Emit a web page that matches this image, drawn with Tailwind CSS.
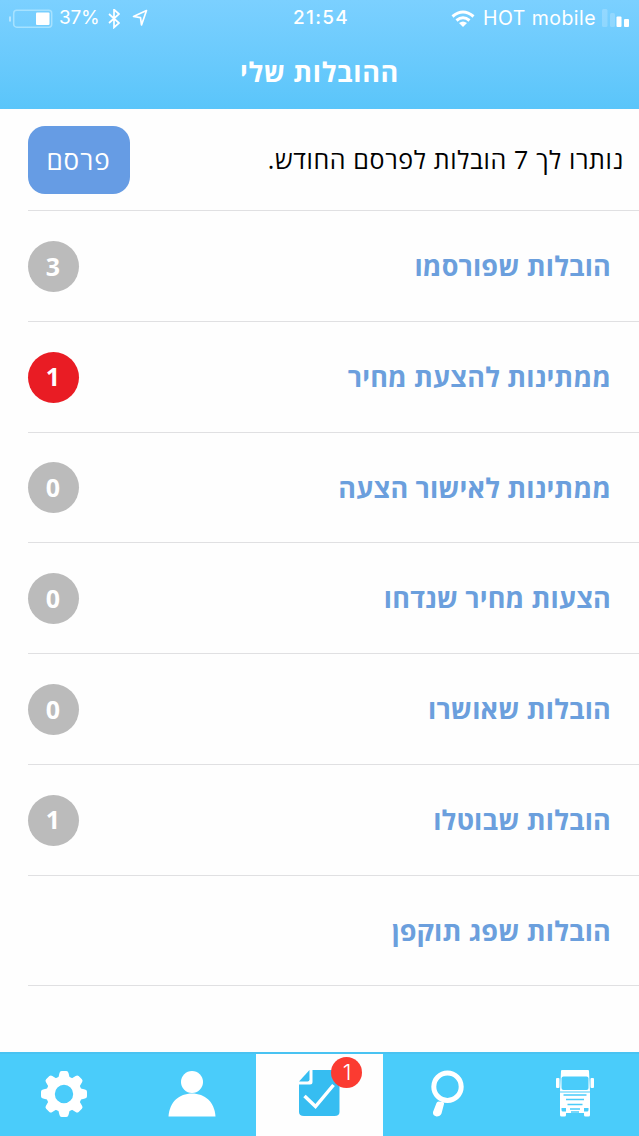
<!DOCTYPE html>
<html lang="he" dir="ltr">
<head>
<meta charset="utf-8">
<title>ההובלות שלי</title>
<script src="https://cdn.jsdelivr.net/npm/@tailwindcss/browser@4"></script>
</head>
<body class="flex h-[1136px] w-[639px] flex-col overflow-hidden bg-[#fefefe] font-['Open_Sans','Noto_Sans',sans-serif]">
<header class="h-[109px] shrink-0 bg-linear-to-b from-[#7bd0ff] to-[#5ac5fa] text-white">
  <div class="grid h-[37px] grid-cols-3 items-center font-['Inter',sans-serif] text-[19px]">
    <div class="flex items-center pl-[9px]">
      <svg class="h-5 w-11" viewBox="0 0 44 20" fill="none"><path d="M1 7.500v5" stroke="#b5e5ff" stroke-width="2"/><rect x="4.700" y="1.200" width="38" height="17" rx="3" stroke="#a6e2ff" stroke-width="1.500"/><rect x="27" y="3.500" width="13.500" height="12.500" rx="1" fill="#fff"/></svg>
      <span class="ml-[6px] w-[40px] whitespace-nowrap tracking-[-0.3px]">37%</span>
      <svg class="ml-[9px] h-5 w-3" viewBox="0 0 12 20" fill="none" stroke="#fff" stroke-width="1.700"><path d="M1 5l10 9-5 4.500V.500L11 5 1 14"/></svg>
      <svg class="ml-[12px] h-5 w-4" viewBox="0 0 16 20" fill="none" stroke="#fff" stroke-width="1.700" stroke-linejoin="round"><path d="M14.500 1.500L1.500 7.500l7 1.200L9.500 16z"/></svg>
    </div>
    <div class="pl-[3px] text-center font-medium tracking-[1.3px]">21:54</div>
    <div class="flex items-center justify-end pr-[9px]">
      <svg class="h-[18px] w-6" viewBox="0 0 24 18" fill="none" stroke="#fff" stroke-width="3"><path d="M1.500 6.500q10.500-9 21 0M5.500 10.500q6.500-5.500 13 0"/><path d="M8 13q4-3 8 0l-4 4z" fill="#fff" stroke="none"/></svg>
      <span class="ml-[8px] whitespace-nowrap text-[19.500px] tracking-[0.450px]">HOT mobile</span>
      <svg class="ml-[6px] h-[19px] w-7" viewBox="0 0 28 19" fill="#fff"><rect width="5.500" height="18" rx="1.500" opacity=".2"/><rect x="8" y="4" width="5" height="14" rx="1.500" opacity=".2"/><rect x="14.500" y="7.500" width="5" height="10.500" rx="1"/><rect x="22" y="10" width="5" height="8" rx="1"/></svg>
    </div>
  </div>
  <h1 dir="rtl" class="mt-[16px] text-center text-[27px] leading-[38px] font-bold tracking-[0.650px]">ההובלות שלי</h1>
</header>
<main class="flex grow flex-col pl-[27.500px]">
  <section class="flex h-[102px] shrink-0 items-center justify-between border-b border-[#e0e0e2] pr-[15px]">
    <button class="h-[68px] w-[102px] rounded-[17px] bg-[#669ce4] pt-[2px] text-[26px] tracking-[1px] text-white">פרסם</button>
    <p dir="rtl" class="text-[25px] tracking-[0.640px] whitespace-nowrap text-black">נותרו לך 7 הובלות לפרסם החודש.</p>
  </section>
  <ul class="text-[27px] font-bold tracking-[0.150px] text-[#6b9fdd]">
    <li class="flex h-[110.75px] items-center justify-between border-b border-[#e0e0e2] pt-px pr-7"><span class="flex size-[51px] items-center justify-center rounded-full bg-[#bbb] text-[25px] text-white">3</span><span dir="rtl">הובלות שפורסמו</span></li>
    <li class="flex h-[110.75px] items-center justify-between border-b border-[#e0e0e2] pt-px pr-7"><span class="flex size-[51px] items-center justify-center rounded-full bg-[#e91c24] text-[25px] text-white">1</span><span dir="rtl">ממתינות להצעת מחיר</span></li>
    <li class="flex h-[110.75px] items-center justify-between border-b border-[#e0e0e2] pt-px pr-7"><span class="flex size-[51px] items-center justify-center rounded-full bg-[#bbb] text-[25px] text-white">0</span><span dir="rtl">ממתינות לאישור הצעה</span></li>
    <li class="flex h-[110.75px] items-center justify-between border-b border-[#e0e0e2] pt-px pr-7"><span class="flex size-[51px] items-center justify-center rounded-full bg-[#bbb] text-[25px] text-white">0</span><span dir="rtl">הצעות מחיר שנדחו</span></li>
    <li class="flex h-[110.75px] items-center justify-between border-b border-[#e0e0e2] pt-px pr-7"><span class="flex size-[51px] items-center justify-center rounded-full bg-[#bbb] text-[25px] text-white">0</span><span dir="rtl">הובלות שאושרו</span></li>
    <li class="flex h-[110.75px] items-center justify-between border-b border-[#e0e0e2] pt-px pr-7"><span class="flex size-[51px] items-center justify-center rounded-full bg-[#bbb] text-[25px] text-white">1</span><span dir="rtl">הובלות שבוטלו</span></li>
    <li class="flex h-[110.75px] items-center justify-end border-b border-[#e0e0e2] pt-px pr-7"><span dir="rtl">הובלות שפג תוקפן</span></li>
  </ul>
</main>
<nav class="grid h-[84px] shrink-0 grid-cols-5 border-t-2 border-[#49c3f2] bg-[#4accfa]">
  <a class="flex justify-center pt-[15.500px]"><svg class="size-[48px]" viewBox="-24 -24 48 48" fill="#fff"><path id="t" d="M-6-15l1.500-6q.400-2 2.200-2h4.600q1.800 0 2.200 2L6-15z"/><use href="#t" transform="rotate(45)"/><use href="#t" transform="rotate(90)"/><use href="#t" transform="rotate(135)"/><use href="#t" transform="rotate(180)"/><use href="#t" transform="rotate(225)"/><use href="#t" transform="rotate(270)"/><use href="#t" transform="rotate(315)"/><circle r="13.500" fill="none" stroke="#fff" stroke-width="8.600"/></svg></a>
  <a class="flex justify-center pt-4"><svg class="size-[48px]" viewBox="0 0 48 48" fill="#fff"><circle cx="24" cy="12" r="11"/><path d="M.500 46.500C1.500 32 11 23.500 24 23.500S46.500 32 47.500 46.500z"/></svg></a>
  <a class="flex justify-center bg-[#fefefe]"><span class="relative block h-[82px] w-[42px]"><svg class="mt-4 h-[47px] w-[42px]" viewBox="0 0 42 47"><path d="M14.500 0H41.500v42q0 4-5 4H6q-5 0-5-4V14.500h11q2.500 0 2.500-2.500z" fill="#36bdf1"/><path d="M11.500 0v9.500q0 2-2 2H1z" fill="#36bdf1"/><path d="M6.500 26l11 10.500L35.500 15" fill="none" stroke="#fff" stroke-width="3.500"/></svg><span class="absolute top-[3px] left-[33px] flex size-[31px] items-center justify-center rounded-full bg-[#fb3b31] font-['Inter',sans-serif] text-[22px] font-light text-white">1</span></span></a>
  <a class="flex justify-center pt-4 pr-px"><svg class="h-[48px] w-[34px]" viewBox="0 0 34 48"><circle cx="17.500" cy="16.700" r="13.700" fill="none" stroke="#fff" stroke-width="5"/><path d="M8.500 31.500l4.500.500q1.500.500 1 2L11.500 43.500q-1.200 3-5 3-4-1-3.500-4.500L6.500 33q.500-1.500 2-1.500z" fill="#fff"/></svg></a>
  <a class="flex justify-center pt-4 pr-px"><svg class="h-[48px] w-[40px]" viewBox="0 0 40 48" fill="#fff"><path d="M6 1q0-1 1-1h26q1 0 1 1l1 20.500H5z"/><rect x="1" y="8" width="3.500" height="10" rx="1"/><rect x="35.500" y="8" width="3.500" height="10" rx="1"/><rect x="6.500" y="6.500" width="27" height="13.500" rx="2" fill="#4accfa"/><path d="M5 22.500h30V45q0 1.500-1.500 1.500h-3Q29 46.500 29 45v-2H11v2q0 1.500-1.500 1.500h-3Q5 46.500 5 45z"/><path d="M8.500 25h23M11 29.500h18M12.500 34.500h15M15 39h10M16 42h8" stroke="#4accfa" stroke-width="1.600"/><path d="M6.500 38h4.500v3.500H8q-1.500 0-1.500-1.500zM33.500 38H29v3.500h3q1.500 0 1.500-1.500z" fill="#4accfa"/></svg></a>
</nav>
</body>
</html>
